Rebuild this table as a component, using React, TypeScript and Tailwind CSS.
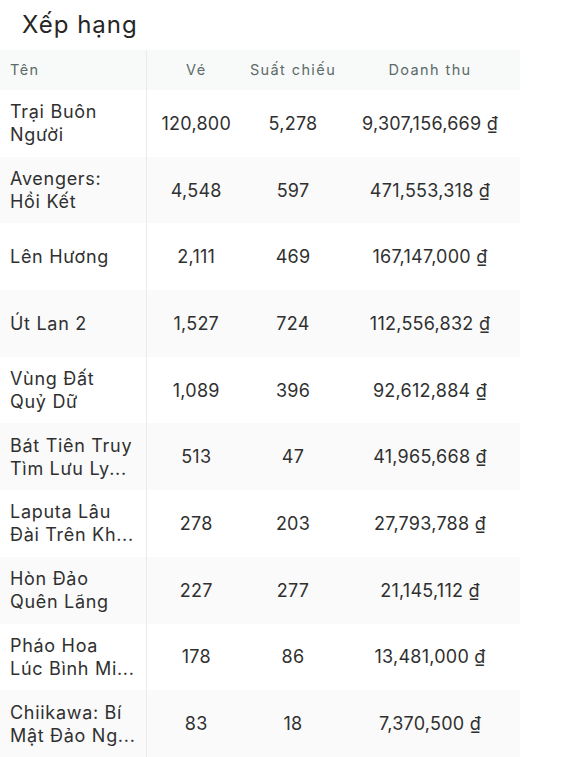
import React from "react";

const rows: [string[], string, string, string][] = [
  [["Trại Buôn", "Người"], "120,800", "5,278", "9,307,156,669 ₫"],
  [["Avengers:", "Hồi Kết"], "4,548", "597", "471,553,318 ₫"],
  [["Lên Hương"], "2,111", "469", "167,147,000 ₫"],
  [["Út Lan 2"], "1,527", "724", "112,556,832 ₫"],
  [["Vùng Đất", "Quỷ Dữ"], "1,089", "396", "92,612,884 ₫"],
  [["Bát Tiên Truy", "Tìm Lưu Ly..."], "513", "47", "41,965,668 ₫"],
  [["Laputa Lâu", "Đài Trên Kh..."], "278", "203", "27,793,788 ₫"],
  [["Hòn Đảo", "Quên Lãng"], "227", "277", "21,145,112 ₫"],
  [["Pháo Hoa", "Lúc Bình Mi..."], "178", "86", "13,481,000 ₫"],
  [["Chiikawa: Bí", "Mật Đảo Ng..."], "83", "18", "7,370,500 ₫"],
];

export default function App() {
  return (
    <div className="w-[569px] bg-white text-[#303030] font-['Inter',sans-serif]">
      <div className="pl-[22px] pt-[9px] h-[50px] text-[24px] leading-[32px] tracking-[1px] text-[#262626]">Xếp hạng</div>
      <table className="table-fixed border-collapse w-[520px]">
        <colgroup>
          <col className="w-[146px]" />
          <col className="w-[100px]" />
          <col className="w-[94px]" />
          <col className="w-[180px]" />
        </colgroup>
        <thead>
          <tr className="h-[40px] bg-[#f8f9f9] text-[14.5px] tracking-[1.4px] text-[#5b6b68]">
            <th className="text-left font-normal pl-[10px] border-r border-[#ebebeb]">Tên</th>
            <th className="font-normal">Vé</th>
            <th className="font-normal">Suất chiếu</th>
            <th className="font-normal">Doanh thu</th>
          </tr>
        </thead>
        <tbody>
          {rows.map((r, i) => (
            <tr key={i} className={(i % 2 === 1 ? "bg-[#fafafa] " : "bg-white ") + "h-[66.7px] text-[18px] leading-[23px]"}>
              <td className="text-left pl-[10px] pr-[4px] border-r border-[#ebebeb] tracking-[0.7px] whitespace-nowrap">
                {r[0].map((l, j) => (
                  <div key={j}>{l}</div>
                ))}
              </td>
              <td className="text-center tracking-[0.25px]">{r[1]}</td>
              <td className="text-center tracking-[0.25px]">{r[2]}</td>
              <td className="text-center tracking-[0.25px]">{r[3]}</td>
            </tr>
          ))}
        </tbody>
      </table>
    </div>
  );
}
